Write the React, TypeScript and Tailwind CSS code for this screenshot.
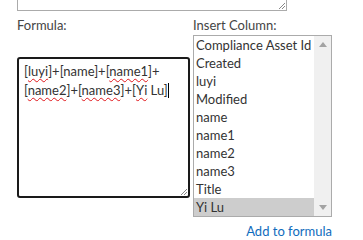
const items = [
  "Compliance Asset Id",
  "Created",
  "luyi",
  "Modified",
  "name",
  "name1",
  "name2",
  "name3",
  "Title",
  "Yi Lu",
];

function Grip({ className }: { className: string }) {
  return (
    <svg className={className} width="10" height="10" viewBox="0 0 10 10">
      <path d="M9 3 L3 9 M9 6 L6 9" stroke="#888" strokeWidth="1" />
    </svg>
  );
}

function Sp({ children }: { children: string }) {
  return <span className="underline decoration-wavy decoration-[#e0161b] decoration-1 underline-offset-2">{children}</span>;
}

export default function App() {
  return (
    <div className="h-[240px] w-[363px] overflow-hidden bg-white font-['Lato',sans-serif] text-[13px] text-[#444]">
      <div className="relative ml-[17px] h-[11px] w-[270px] border border-t-0 border-[#ababab]">
        <Grip className="absolute bottom-0 right-0" />
      </div>
      <div className="ml-[17px] mt-[5px] flex gap-[3px]">
        <div className="w-[173px]">
          <div className="h-[18px] leading-[18px]">Formula:</div>
          <div className="relative mt-[23px] h-[141px] rounded-[3px] border-2 border-[#1a1a1a] px-[5px] pt-[5px] leading-[15.5px] text-[#333]">
            [<Sp>luyi</Sp>]+[name]+[<Sp>name1</Sp>]+ [<Sp>name2</Sp>]+[<Sp>name3</Sp>]+[<Sp>Yi</Sp> Lu]
            <span className="inline-block h-[15px] w-px translate-y-[3px] bg-black" />
            <Grip className="absolute bottom-0 right-0" />
          </div>
        </div>
        <div className="w-[139px]">
          <div className="h-[18px] leading-[18px]">Insert Column:</div>
          <div className="mt-px flex h-[182px] border border-[#ababab]">
            <div className="flex-1 overflow-hidden text-[13px] text-[#333]">
              {items.map((it) => (
                <div
                  key={it}
                  className={`h-[18px] whitespace-nowrap pl-[2px] leading-[18px] ${it === "Yi Lu" ? "bg-[#cdcdcd]" : ""}`}
                >
                  {it}
                </div>
              ))}
            </div>
            <div className="flex w-[17px] flex-col items-center justify-between bg-[#f0f0f0] py-[6px]">
              <svg width="8" height="5" viewBox="0 0 8 5">
                <path d="M0 5 L4 0 L8 5 Z" fill="#a3a3a3" />
              </svg>
              <svg width="8" height="5" viewBox="0 0 8 5">
                <path d="M0 0 L4 5 L8 0 Z" fill="#a3a3a3" />
              </svg>
            </div>
          </div>
          <div className="mt-[5px] text-right text-[#0f6cbd] leading-[18px]">Add to formula</div>
        </div>
      </div>
    </div>
  );
}
